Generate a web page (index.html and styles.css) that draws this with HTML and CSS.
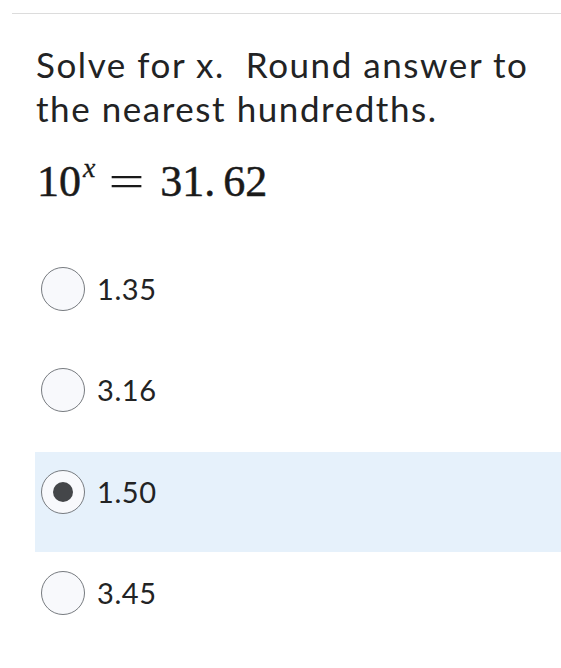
FILE: index.html
```html
<!DOCTYPE html>
<html>
<head>
<meta charset="utf-8">
<link rel="stylesheet" href="styles.css">
</head>
<body>
<div class="rule"></div>
<div class="question">
  <p class="prompt">Solve for x.&nbsp; Round answer to the nearest hundredths.</p>
  <p class="math"><span class="num">10</span><sup class="var">x</sup><span class="eq">=</span><span class="num">31.</span><span class="num sp">62</span></p>
  <div class="options">
    <div class="option"><span class="radio"></span><span class="label">1.35</span></div>
    <div class="option"><span class="radio"></span><span class="label">3.16</span></div>
    <div class="option selected"><span class="radio checked"></span><span class="label">1.50</span></div>
    <div class="option"><span class="radio"></span><span class="label">3.45</span></div>
  </div>
</div>
</body>
</html>
```
FILE: styles.css
```css
html, body {
  margin: 0;
  padding: 0;
  background: #ffffff;
}
body {
  width: 561px;
  height: 668px;
  overflow: hidden;
  font-family: Lato, "Liberation Sans", sans-serif;
  color: #222324;
}
.rule {
  margin: 13px 0 0 12px;
  border-top: 1px solid #dcdcdc;
}
.question {
  padding-left: 35px;
}
.prompt {
  margin: 28px 0 0 1px;
  font-size: 35px;
  line-height: 44px;
  letter-spacing: 1.55px;
  width: 524px;
}
.math {
  margin: 27px 0 0 2px;
  font-family: "Liberation Serif", "Times New Roman", serif;
  font-size: 44px;
  line-height: 50px;
  color: #1a1a1a;
  -webkit-text-stroke: 0.5px #1a1a1a;
  white-space: nowrap;
}
.math .var {
  font-style: italic;
  font-size: 28px;
  vertical-align: 0;
  position: relative;
  top: -19px;
  margin-left: 2px;
  -webkit-text-stroke: 0.3px #1a1a1a;
}
.math .eq {
  display: inline-block;
  transform: scaleX(1.45);
  margin: 0 21px 0 19px;
  -webkit-text-stroke: 0;
}
.math .sp {
  margin-left: 8px;
}
.options {
  margin: 37px 0 0;
  display: flex;
  flex-direction: column;
}
.option {
  height: 101px;
  display: flex;
  align-items: flex-start;
  padding-left: 6px;
  box-sizing: border-box;
}
.option.selected {
  background: #e6f1fb;
  height: 100px;
  margin: 1px 0 1px;
}
.option .radio {
  margin-top: 18px;
  width: 42px;
  height: 42px;
  border: 1px solid #777b80;
  border-radius: 50%;
  background: #f8f9fc;
  display: flex;
  align-items: center;
  justify-content: center;
  flex: none;
}
.option .radio.checked::after {
  content: "";
  width: 20px;
  height: 20px;
  border-radius: 50%;
  background: #444649;
}
.option .label {
  margin: 20px 0 0 12px;
  font-size: 29px;
  line-height: 40px;
  letter-spacing: 0.6px;
}
```
